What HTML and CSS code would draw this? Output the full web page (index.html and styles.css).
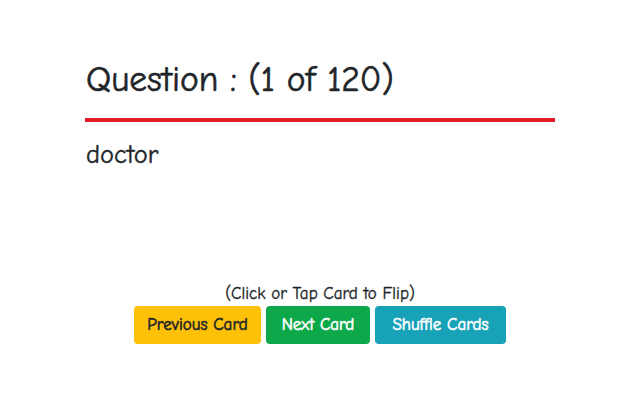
FILE: index.html
```html
<!DOCTYPE html>
<html lang="en">
<head>
<meta charset="utf-8">
<title>Flash Cards</title>
<link rel="stylesheet" href="styles.css">
</head>
<body>
<main class="page">
  <section class="card">
    <h1 class="card-title">Question : (1 of 120)</h1>
    <hr class="card-rule">
    <p class="card-text">doctor</p>
  </section>
  <div class="controls">
    <p class="hint">(Click or Tap Card to Flip)</p>
    <div class="buttons">
      <button class="btn btn-prev">Previous Card</button>
      <button class="btn btn-next">Next Card</button>
      <button class="btn btn-shuffle">Shuffle Cards</button>
    </div>
  </div>
</main>
</body>
</html>
```

FILE: styles.css
```css
html, body {
  margin: 0;
  padding: 0;
  background: #ffffff;
}

body {
  font-family: "Comic Sans MS", "Comic Neue", "DejaVu Sans", sans-serif;
  color: #212529;
  width: 640px;
  height: 400px;
  overflow: hidden;
  -webkit-text-stroke: 0.35px currentColor;
}

.page {
  display: flex;
  flex-direction: column;
  align-items: center;
  padding-top: 60px;
}

.card {
  width: 470px;
  display: flex;
  flex-direction: column;
}

.card-title {
  margin: 0;
  font-size: 35.5px;
  line-height: 40px;
  font-weight: normal;
  padding-left: 1px;
  -webkit-text-stroke: 0.6px currentColor;
}

.card-rule {
  margin: 18px 0 0 0;
  height: 4px;
  border: 0;
  background: #e21f26;
}

.card-text {
  margin: 18px 0 0 0;
  font-size: 26.5px;
  line-height: 30px;
  padding-left: 1px;
  -webkit-text-stroke: 0.4px currentColor;
}

.controls {
  margin-top: 112px;
  display: flex;
  flex-direction: column;
  align-items: center;
}

.hint {
  margin: 0;
  font-size: 17px;
  line-height: 24px;
}

.buttons {
  display: flex;
  gap: 5px;
}

.btn {
  font-family: inherit;
  font-size: 17px;
  line-height: 24px;
  height: 38px;
  padding: 7px 0;
  border: 0;
  border-radius: 4px;
  color: #ffffff;
  cursor: pointer;
  -webkit-text-stroke: 0.6px currentColor;
}

.btn-prev {
  width: 127px;
  background: #ffc107;
  color: #212529;
}

.btn-next {
  width: 104px;
  background: #0ca84a;
}

.btn-shuffle {
  width: 131px;
  background: #17a2b8;
}
```
